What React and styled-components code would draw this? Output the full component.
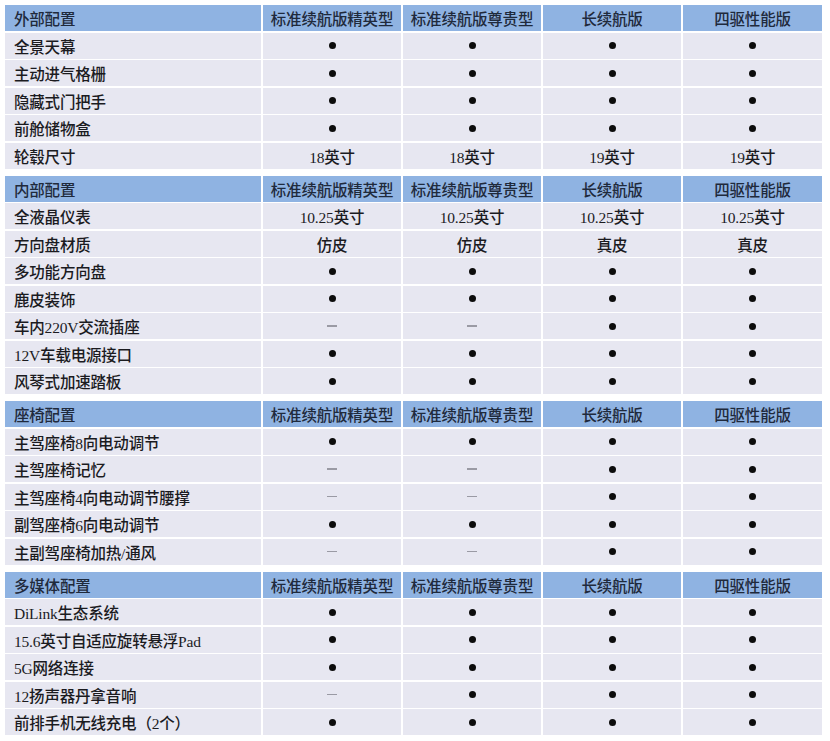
import React from "react";
import styled, { createGlobalStyle } from "styled-components";

const Global = createGlobalStyle`
  html, body { margin: 0; padding: 0; background: #ffffff; }
  body { font-family: "Liberation Serif", "Noto Sans CJK SC", serif; }
`;

const Page = styled.div`
  width: 830px;
  height: 741px;
  box-sizing: border-box;
  padding: 5px 8px 0 5px;
  display: flex;
  flex-direction: column;
  gap: 7px;
  background: #ffffff;
`;

const Section = styled.div`
  display: grid;
  grid-template-columns: 256px 138px 138px 138px 139px;
  grid-auto-rows: 26px;
  column-gap: 2px;
  row-gap: 1.5px;
  background: #ffffff;
`;

const Cell = styled.div`
  background: ${(p) => (p.$head ? "#8fb3e2" : "#e7e7f1")};
  color: ${(p) => (p.$head ? "#1f2a3c" : "#1b1b1f")};
  font-size: 15.5px;
  font-weight: 500;
  display: flex;
  align-items: center;
  justify-content: ${(p) => (p.$left ? "flex-start" : "center")};
  padding-left: ${(p) => (p.$left ? "9px" : "0")};
  white-space: nowrap;
  overflow: hidden;
  letter-spacing: -0.2px;
`;

const Dot = styled.span`
  width: 7px;
  height: 7px;
  border-radius: 50%;
  background: #0c0c0c;
`;

const Dash = styled.span`
  width: 10px;
  height: 1.5px;
  background: #9a9aa4;
`;

const models = ["标准续航版精英型", "标准续航版尊贵型", "长续航版", "四驱性能版"];

const sections = [
  {
    title: "外部配置",
    rows: [
      ["全景天幕", "o", "o", "o", "o"],
      ["主动进气格栅", "o", "o", "o", "o"],
      ["隐藏式门把手", "o", "o", "o", "o"],
      ["前舱储物盒", "o", "o", "o", "o"],
      ["轮毂尺寸", "18英寸", "18英寸", "19英寸", "19英寸"],
    ],
  },
  {
    title: "内部配置",
    rows: [
      ["全液晶仪表", "10.25英寸", "10.25英寸", "10.25英寸", "10.25英寸"],
      ["方向盘材质", "仿皮", "仿皮", "真皮", "真皮"],
      ["多功能方向盘", "o", "o", "o", "o"],
      ["鹿皮装饰", "o", "o", "o", "o"],
      ["车内220V交流插座", "-", "-", "o", "o"],
      ["12V车载电源接口", "o", "o", "o", "o"],
      ["风琴式加速踏板", "o", "o", "o", "o"],
    ],
  },
  {
    title: "座椅配置",
    rows: [
      ["主驾座椅8向电动调节", "o", "o", "o", "o"],
      ["主驾座椅记忆", "-", "-", "o", "o"],
      ["主驾座椅4向电动调节腰撑", "-", "-", "o", "o"],
      ["副驾座椅6向电动调节", "o", "o", "o", "o"],
      ["主副驾座椅加热/通风", "-", "-", "o", "o"],
    ],
  },
  {
    title: "多媒体配置",
    rows: [
      ["DiLink生态系统", "o", "o", "o", "o"],
      ["15.6英寸自适应旋转悬浮Pad", "o", "o", "o", "o"],
      ["5G网络连接", "o", "o", "o", "o"],
      ["12扬声器丹拿音响", "-", "o", "o", "o"],
      ["前排手机无线充电（2个）", "o", "o", "o", "o"],
    ],
  },
];

function Value({ v }) {
  if (v === "o") return <Dot />;
  if (v === "-") return <Dash />;
  return <>{v}</>;
}

export default function App() {
  return (
    <>
      <Global />
      <Page>
        {sections.map((s) => (
          <Section key={s.title}>
            <Cell $head $left>{s.title}</Cell>
            {models.map((m) => (
              <Cell $head key={m}>{m}</Cell>
            ))}
            {s.rows.map((r) => (
              <React.Fragment key={r[0]}>
                <Cell $left>{r[0]}</Cell>
                {r.slice(1).map((v, i) => (
                  <Cell key={i}>
                    <Value v={v} />
                  </Cell>
                ))}
              </React.Fragment>
            ))}
          </Section>
        ))}
      </Page>
    </>
  );
}
